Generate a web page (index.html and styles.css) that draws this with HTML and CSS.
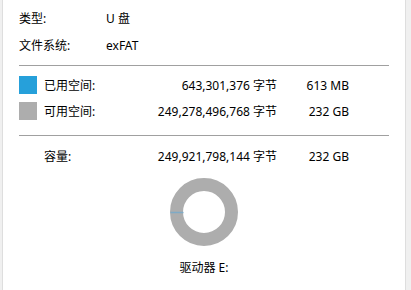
FILE: index.html
```html
<!DOCTYPE html>
<html lang="zh-CN">
<head>
<meta charset="utf-8">
<link rel="stylesheet" href="styles.css">
</head>
<body>
<div class="page">
  <div class="edge edge-left"></div>
  <div class="main">
    <div class="info-row"><span class="info-label">类型:</span><span>U 盘</span></div>
    <div class="info-row"><span class="info-label">文件系统:</span><span>exFAT</span></div>
    <div class="divider first"></div>
    <div class="space-grid">
      <span class="swatch used"></span><span>已用空间:</span><span class="num">643,301,376 字节</span><span class="num">613 MB</span>
      <span class="swatch free"></span><span>可用空间:</span><span class="num">249,278,496,768 字节</span><span class="num">232 GB</span>
    </div>
    <div class="divider second"></div>
    <div class="space-grid cap">
      <span></span><span>容量:</span><span class="num">249,921,798,144 字节</span><span class="num">232 GB</span>
    </div>
    <div class="donut-wrap">
      <svg width="68" height="68" viewBox="0 0 68 68">
        <circle cx="34" cy="34" r="27.5" fill="none" stroke="#adadad" stroke-width="13"/>
        <line x1="0.5" y1="34.5" x2="13.5" y2="34.5" stroke="#7eaac6" stroke-width="1.5"/>
      </svg>
    </div>
    <div class="drive">驱动器 E:</div>
  </div>
  <div class="edge edge-right"></div>
</div>
</body>
</html>
```
FILE: styles.css
```css
html, body {
  margin: 0;
  padding: 0;
  background: #ffffff;
}
body {
  font-family: "Noto Sans", "Noto Sans CJK SC", sans-serif;
  font-size: 12px;
  color: #000000;
}
.page {
  display: flex;
  height: 290px;
  width: 411px;
  overflow: hidden;
}
.edge {
  background: #f0f0f0;
}
.edge-left {
  width: 2px;
  border-right: 1px solid #dedede;
}
.edge-right {
  width: 5px;
  border-left: 1px solid #dedede;
}
.main {
  flex: 1;
  padding: 5px 16px 0 16px;
  display: flex;
  flex-direction: column;
}
.info-row {
  display: flex;
  height: 27px;
  line-height: 27px;
}
.info-label {
  width: 87px;
}
.divider {
  height: 1px;
  background: #a0a0a0;
}
.divider.first {
  margin-top: 6px;
}
.divider.second {
  margin-top: 11px;
}
.space-grid {
  display: grid;
  grid-template-columns: 25px 80px 153px 72px;
  grid-auto-rows: 26px;
  align-items: center;
  margin-top: 6px;
}
.space-grid.cap {
  margin-top: 7px;
}
.num {
  text-align: right;
}
.swatch {
  width: 18px;
  height: 18px;
}
.swatch.used {
  background: #26a0da;
}
.swatch.free {
  background: #adadad;
}
.donut-wrap {
  display: flex;
  justify-content: center;
  margin-top: 9px;
}
.donut-wrap svg {
  display: block;
}
.drive {
  text-align: center;
  margin-top: 14px;
  line-height: 16px;
}
```
